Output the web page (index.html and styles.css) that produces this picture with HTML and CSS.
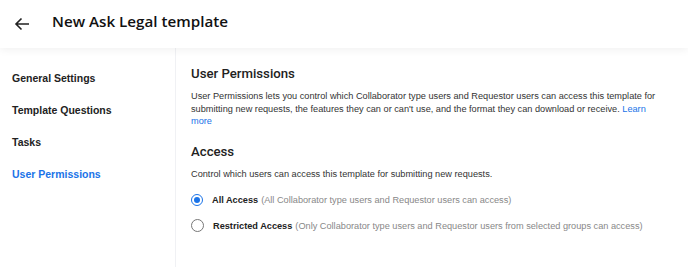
FILE: index.html
```html
<!DOCTYPE html>
<html>
<head>
    <title>New Ask Legal template</title>
    <link rel="stylesheet" href="styles.css">
</head>
<body>
    <div class="header">
        <span class="back">
            <svg width="16" height="14" viewBox="0 0 16 14">
                <path d="M15 7H2M7.5 1.5L2 7l5.5 5.5" fill="none" stroke="#222" stroke-width="1.6"/>
            </svg>
        </span>
        <span class="title">New Ask Legal template</span>
    </div>

    <div class="page">
        <div class="sidebar">
            <div class="nav-item">General Settings</div>
            <div class="nav-item">Template Questions</div>
            <div class="nav-item">Tasks</div>
            <div class="nav-item active">User Permissions</div>
        </div>

        <div class="content">
            <h2>User Permissions</h2>
            <p class="desc">
                User Permissions lets you control which Collaborator type users and Requestor users can access this template for
                submitting new requests, the features they can or can't use, and the format they can download or receive.
                <a href="#">Learn more</a>
            </p>

            <h2 class="access">Access</h2>
            <p class="control">Control which users can access this template for submitting new requests.</p>

            <div class="option">
                <span class="radio checked"></span>
                <span class="label">All Access</span>
                <span class="hint">(All Collaborator type users and Requestor users can access)</span>
            </div>
            <div class="option">
                <span class="radio"></span>
                <span class="label">Restricted Access</span>
                <span class="hint">(Only Collaborator type users and Requestor users from selected groups can access)</span>
            </div>
        </div>
    </div>
</body>
</html>
```

FILE: styles.css
```css
body {
    margin: 0;
    font-family: 'Liberation Sans', Arial, sans-serif;
    color: #222;
    background: #fff;
}
.header {
    height: 48px;
    display: flex;
    align-items: center;
    padding-left: 14px;
    background: #fff;
    box-shadow: 0 2px 8px rgba(0, 0, 0, 0.06);
    position: relative;
}
.back {
    display: flex;
    width: 38px;
}
.title {
    font-family: 'Open Sans', sans-serif;
    font-size: 15.2px;
    font-weight: 600;
    color: #111;
    margin-top: -7px;
}
.page {
    display: flex;
    height: 219px;
}
.sidebar {
    width: 175px;
    border-right: 1px solid #f0f1f4;
    padding-top: 20px;
}
.nav-item {
    padding-left: 12px;
    font-size: 10.5px;
    font-weight: bold;
    color: #222;
    height: 32px;
    line-height: 20px;
}
.nav-item.active {
    color: #1a73e8;
}
.content {
    flex: 1;
    padding: 18px 0 0 15px;
}
h2 {
    font-family: Roboto, sans-serif;
    font-size: 13.2px;
    line-height: 16px;
    font-weight: 500;
    margin: 0 0 8px;
    color: #222;
}
.desc {
    font-size: 9.2px;
    line-height: 12.5px;
    color: #333;
    margin: 0 0 16.5px;
    padding-right: 30px;
}
.desc a {
    color: #1a73e8;
    text-decoration: none;
}
.control {
    font-size: 9.2px;
    line-height: 13px;
    color: #333;
    margin: 0 0 5.5px;
}
.option {
    display: flex;
    align-items: center;
    font-size: 9.2px;
    height: 26px;
}
.radio {
    width: 11px;
    height: 11px;
    border: 1px solid #777;
    border-radius: 50%;
    margin-right: 9px;
    display: flex;
    align-items: center;
    justify-content: center;
}
.radio.checked {
    border: 1.5px solid #1a73e8;
    width: 10px;
    height: 10px;
}
.radio.checked::after {
    content: '';
    width: 6px;
    height: 6px;
    border-radius: 50%;
    background: #1a73e8;
}
.label {
    font-weight: bold;
    color: #222;
    margin-right: 3px;
}
.hint {
    color: #888;
}
```
